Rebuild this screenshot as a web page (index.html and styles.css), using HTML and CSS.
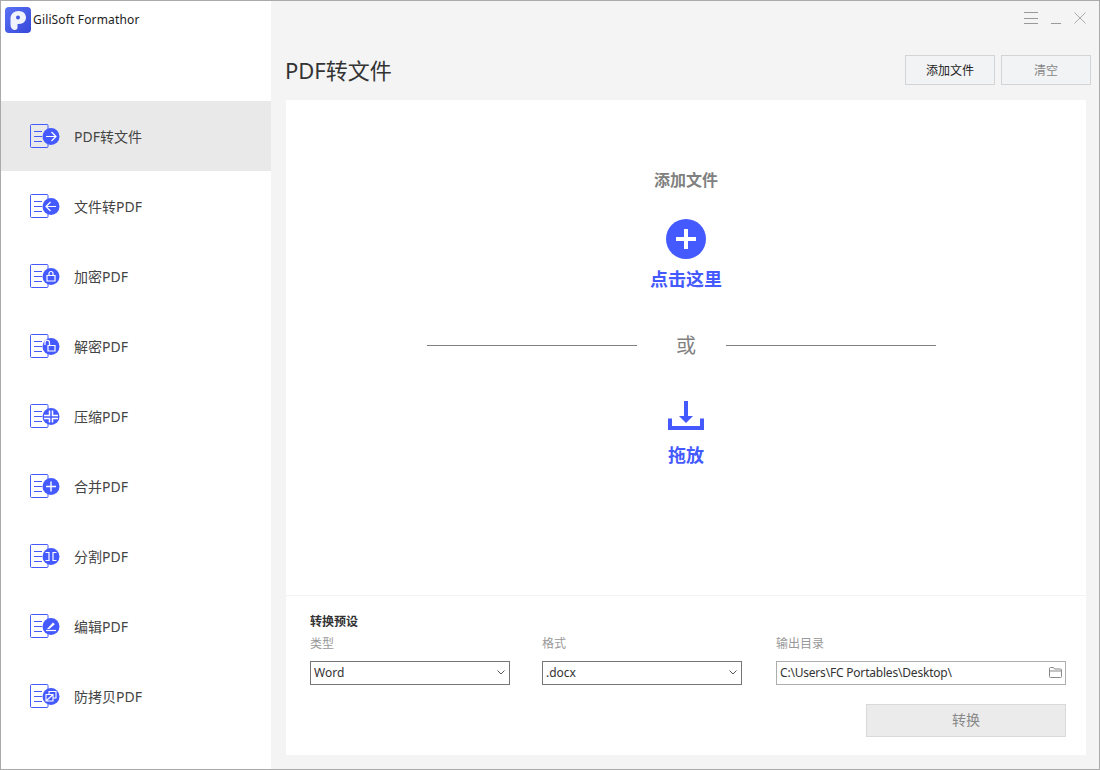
FILE: index.html
```html
<!DOCTYPE html>
<html lang="zh-CN">
<head>
    <meta charset="UTF-8">
    <title>GiliSoft Formathor</title>
    <link rel="stylesheet" href="styles.css">
</head>
<body>
<svg class="defs" width="0" height="0">
    <symbol id="doc" viewBox="0 0 30 24">
        <path d="M17 .5H1.500a1 1 0 0 0-1 1v21a1 1 0 0 0 1 1H17a1 1 0 0 0 1-1V19M18 5.500v-4a1 1 0 0 0-1-1" fill="none" stroke="#445aff"/>
        <path d="M4 7.500h8M4 12.500h8M4 17.500h8" fill="none" stroke="#445aff"/>
        <circle cx="21" cy="12.500" r="8.500" fill="#445aff"/>
    </symbol>
</svg>

<div class="app">
    <aside class="sidebar">
        <div class="brand">
            <svg class="logo" width="26" height="26" viewBox="0 0 26 26">
                <defs>
                    <linearGradient id="logoBg" x1="0" y1="0" x2="1" y2="1">
                        <stop offset="0" stop-color="#5a72f5"/>
                        <stop offset="1" stop-color="#3547d8"/>
                    </linearGradient>
                </defs>
                <rect width="26" height="26" rx="4" fill="url(#logoBg)"/>
                <path d="M5.500 11.500C5.500 7 9 4 13.500 4c4.500 0 7.500 2.800 7.500 6.500S18 17 14 17h-1.500v3.500c0 1.500-1 2.500-2.700 2.500-2.500 0-4.300-2.500-4.300-5.500z" fill="#f1f3fc"/>
                <circle cx="13" cy="10.500" r="2" fill="#4258e4"/>
            </svg>
            <span class="brand-name">GiliSoft Formathor</span>
        </div>
        <nav class="nav">
            <a class="nav-item active">
                <svg class="nav-icon" width="30" height="24" viewBox="0 0 30 24"><use href="#doc"/><path d="M16 12.500h10M21.500 8l4.500 4.500-4.500 4.500" fill="none" stroke="#fff" stroke-width="1.200"/></svg>
                <span>PDF转文件</span>
            </a>
            <a class="nav-item">
                <svg class="nav-icon" width="30" height="24" viewBox="0 0 30 24"><use href="#doc"/><path d="M26 12.500H16M20.500 8L16 12.500l4.500 4.500" fill="none" stroke="#fff" stroke-width="1.200"/></svg>
                <span>文件转PDF</span>
            </a>
            <a class="nav-item">
                <svg class="nav-icon" width="30" height="24" viewBox="0 0 30 24"><use href="#doc"/><path d="M19 11.500V9.500a2 2 0 0 1 4 0v2M17 11.500h8V17h-8z" fill="none" stroke="#fff" stroke-width="1.200"/></svg>
                <span>加密PDF</span>
            </a>
            <a class="nav-item">
                <svg class="nav-icon" width="30" height="24" viewBox="0 0 30 24"><use href="#doc"/><path d="M15 11V8.500a2.250 2.250 0 0 1 4.500 0V11.500M18 11.500h7V17h-7z" fill="none" stroke="#fff" stroke-width="1.200"/></svg>
                <span>解密PDF</span>
            </a>
            <a class="nav-item">
                <svg class="nav-icon" width="30" height="24" viewBox="0 0 30 24"><use href="#doc"/><path d="M19.500 6.500v5H14M22.500 6.500v5H28M19.500 18.500v-4H14M22.500 18.500v-4H28" fill="none" stroke="#fff" stroke-width="1.500"/></svg>
                <span>压缩PDF</span>
            </a>
            <a class="nav-item">
                <svg class="nav-icon" width="30" height="24" viewBox="0 0 30 24"><use href="#doc"/><path d="M21 7.500v10M16 12.500h10" fill="none" stroke="#fff" stroke-width="1.400"/></svg>
                <span>合并PDF</span>
            </a>
            <a class="nav-item">
                <svg class="nav-icon" width="30" height="24" viewBox="0 0 30 24"><use href="#doc"/><path d="M15.500 8.500h3.500v8h-3.500M26.500 8.500H23v8h3.500" fill="none" stroke="#fff" stroke-width="1.200"/></svg>
                <span>分割PDF</span>
            </a>
            <a class="nav-item">
                <svg class="nav-icon" width="30" height="24" viewBox="0 0 30 24"><use href="#doc"/><path d="M16 16.500h10" fill="none" stroke="#fff" stroke-width="1.200"/><path d="M17 15l6-6.500 1.800 1.800-5.500 4.700z" fill="#fff"/></svg>
                <span>编辑PDF</span>
            </a>
            <a class="nav-item">
                <svg class="nav-icon" width="30" height="24" viewBox="0 0 30 24"><use href="#doc"/><path d="M19 10V7.500h7V14h-2.500M16 10.500h7V17h-7zM16.500 16.500l6-5.500" fill="none" stroke="#fff" stroke-width="1.100"/></svg>
                <span>防拷贝PDF</span>
            </a>
        </nav>
    </aside>

    <main class="main">
        <div class="titlebar">
            <svg width="14" height="12" viewBox="0 0 14 12"><path d="M0 .5h14M0 6.500h14M0 11.500h14" stroke="#999" fill="none"/></svg>
            <svg width="10" height="12" viewBox="0 0 10 12"><path d="M0 11.500h10" stroke="#999" fill="none"/></svg>
            <svg width="12" height="12" viewBox="0 0 12 12"><path d="M.5.500l11 11M11.500.500l-11 11" stroke="#aaa" fill="none"/></svg>
        </div>
        <div class="head">
            <h1>PDF转文件</h1>
            <div class="head-btns">
                <button class="btn">添加文件</button>
                <button class="btn off">清空</button>
            </div>
        </div>

        <section class="panel">
            <div class="drop">
                <div class="add-title">添加文件</div>
                <svg class="plus" width="40" height="40" viewBox="0 0 40 40">
                    <circle cx="20" cy="20" r="20" fill="#445aff"/>
                    <path d="M20 10v20M10 20h20" stroke="#fff" stroke-width="4" fill="none"/>
                </svg>
                <div class="link-text click-text">点击这里</div>
                <div class="or-row">
                    <span class="or-line"></span>
                    <span class="or">或</span>
                    <span class="or-line"></span>
                </div>
                <svg class="drop-icon" width="36" height="29" viewBox="0 0 36 29">
                    <path d="M2 17.500V27h32v-9.500" stroke="#445aff" stroke-width="4" fill="none"/>
                    <path d="M16 0h4v15h5l-7 7-7-7h5z" fill="#445aff"/>
                </svg>
                <div class="link-text drop-text">拖放</div>
            </div>

            <div class="preset">
                <div class="preset-title">转换预设</div>
                <div class="fields">
                    <div class="field type">
                        <label>类型</label>
                        <div class="box">
                            <span>Word</span>
                            <svg width="8" height="5" viewBox="0 0 8 5"><path d="M.5.500L4 4 7.500.500" stroke="#555" fill="none"/></svg>
                        </div>
                    </div>
                    <div class="field format">
                        <label>格式</label>
                        <div class="box">
                            <span>.docx</span>
                            <svg width="8" height="5" viewBox="0 0 8 5"><path d="M.5.500L4 4 7.500.500" stroke="#555" fill="none"/></svg>
                        </div>
                    </div>
                    <div class="field output">
                        <label>输出目录</label>
                        <div class="box path">
                            <span>C:\Users\FC Portables\Desktop\</span>
                            <svg width="13" height="11" viewBox="0 0 13 11"><path d="M.5 9.500v-8a1 1 0 0 1 1-1h3l1 1.500h6a1 1 0 0 1 1 1v6.500a1 1 0 0 1-1 1h-10a1 1 0 0 1-1-1zM.5 4h12" stroke="#888" fill="none"/></svg>
                        </div>
                    </div>
                </div>
                <div class="convert-row">
                    <button class="convert">转换</button>
                </div>
            </div>
        </section>
    </main>
</div>
</body>
</html>
```

FILE: styles.css
```css
* {
    box-sizing: border-box;
}
html, body {
    margin: 0;
    padding: 0;
}
body {
    font-family: "Noto Sans", "Noto Sans CJK SC", sans-serif;
    width: 1100px;
    height: 770px;
    overflow: hidden;
}
.defs {
    display: block;
    height: 0;
}
.app {
    display: flex;
    width: 1100px;
    height: 770px;
    border: 1px solid #aaa;
    background: #f4f4f4;
}

/* sidebar */
.sidebar {
    width: 270px;
    flex: none;
    background: #fff;
}
.brand {
    display: flex;
    height: 100px;
    padding: 6px 0 0 4px;
}
.logo {
    flex: none;
}
.brand-name {
    margin: 5px 0 0 2px;
    font-size: 12px;
    line-height: 16px;
    letter-spacing: 0.15px;
    color: #222;
}
.nav-item {
    display: flex;
    align-items: center;
    height: 70px;
    padding-left: 29px;
    font-size: 14px;
    color: #444;
}
.nav-item.active {
    background: #e9e9e9;
}
.nav-icon {
    flex: none;
    margin-right: 14px;
}

/* main column */
.main {
    flex: 1;
    display: flex;
    flex-direction: column;
    min-width: 0;
}
.titlebar {
    display: flex;
    justify-content: flex-end;
    gap: 13px;
    height: 54px;
    padding: 11px 13px 0 0;
}
.head {
    display: flex;
    justify-content: space-between;
    align-items: center;
    height: 30px;
    margin-bottom: 15px;
    padding: 0 8px 0 14px;
}
.head h1 {
    margin: 0;
    font-size: 22px;
    font-weight: 400;
    line-height: 30px;
    color: #333;
}
.head-btns {
    display: flex;
    gap: 6px;
}
.btn {
    width: 90px;
    height: 30px;
    padding: 0;
    font-family: inherit;
    font-size: 12px;
    color: #222;
    background: #f2f3f5;
    border: 1px solid #d2d4d6;
}
.btn.off {
    color: #888;
}

/* white panel */
.panel {
    flex: 1;
    display: flex;
    flex-direction: column;
    margin: 0 13px 14px 15px;
    background: #fff;
}
.drop {
    flex: 1;
    display: flex;
    flex-direction: column;
    align-items: center;
    padding-top: 68px;
}
.add-title {
    font-size: 16px;
    font-weight: 700;
    line-height: 24px;
    color: #808080;
}
.plus {
    margin-top: 27px;
}
.link-text {
    font-size: 18px;
    font-weight: 700;
    line-height: 24px;
    color: #445aff;
}
.click-text {
    margin-top: 8px;
}
.or-row {
    display: flex;
    align-items: center;
    margin: 39px 9px 0 0;
    height: 30px;
}
.or-line {
    width: 210px;
    height: 1px;
    background: #808080;
}
.or {
    width: 89px;
    padding: 2px 0 0 9px;
    text-align: center;
    font-size: 20px;
    line-height: 30px;
    color: #808080;
}
.drop-icon {
    margin-top: 41px;
}
.drop-text {
    margin-top: 13px;
}

/* preset */
.preset {
    height: 160px;
    padding: 18px 20px 0 24px;
    border-top: 1px solid #f3f3f3;
}
.preset-title {
    font-size: 12px;
    font-weight: 700;
    line-height: 16px;
    color: #333;
}
.fields {
    display: flex;
    margin-top: 6px;
}
.field label {
    display: block;
    font-size: 12px;
    line-height: 16px;
    color: #999;
}
.type {
    width: 200px;
    margin-right: 32px;
}
.format {
    width: 200px;
    margin-right: 34px;
}
.output {
    width: 290px;
}
.box {
    display: flex;
    justify-content: space-between;
    align-items: center;
    height: 24px;
    margin-top: 9px;
    padding: 0 4px 1px 3px;
    font-size: 12px;
    color: #333;
    border: 1px solid #767676;
}
.box.path {
    padding-right: 3px;
    letter-spacing: -0.2px;
    border-color: #adadad;
}
.convert-row {
    display: flex;
    justify-content: flex-end;
    margin-top: 19px;
}
.convert {
    width: 200px;
    height: 33px;
    padding: 0 0 3px;
    font-family: inherit;
    font-size: 14px;
    color: #888;
    background: #ebebeb;
    border: 1px solid #d9d9d9;
}
```
